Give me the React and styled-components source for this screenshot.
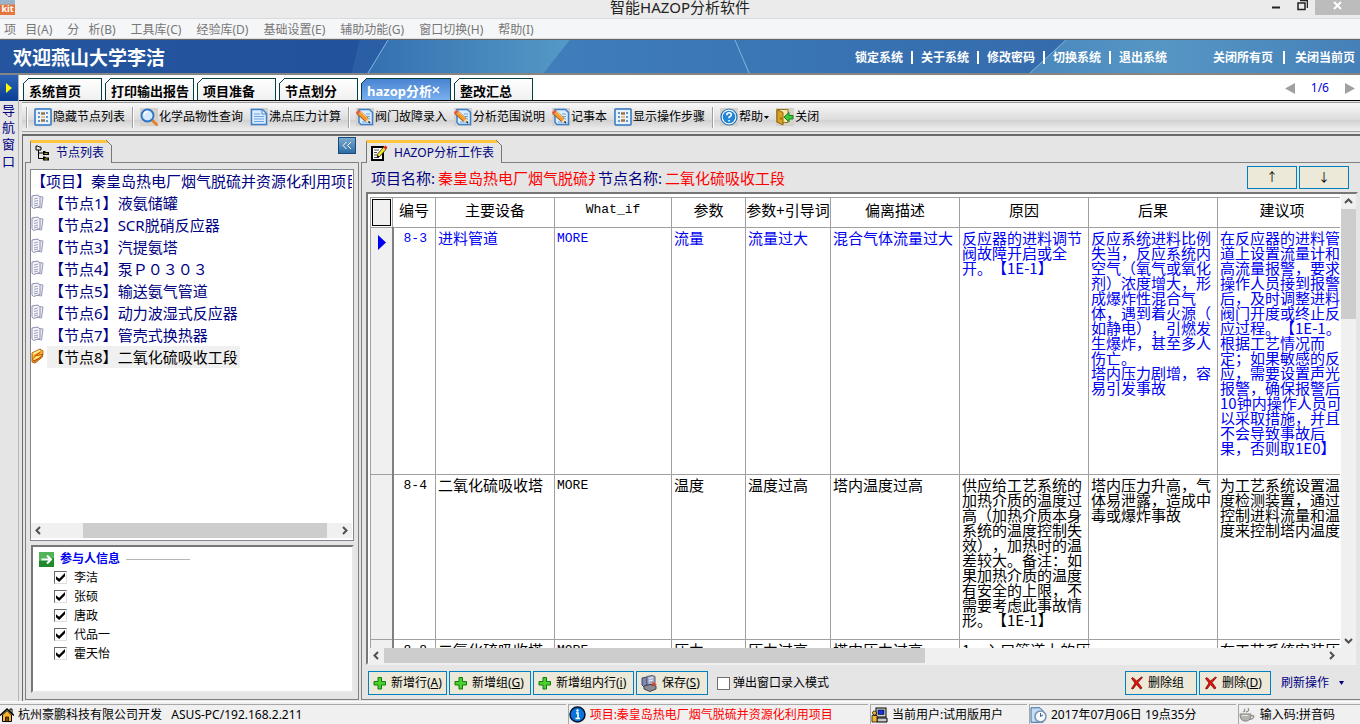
import React, { useState } from 'react'
import styled, { createGlobalStyle } from 'styled-components'

const GlobalStyle = createGlobalStyle`
  * { box-sizing: border-box; }
  body {
    margin: 0;
    overflow: hidden;
    background: #f0f0f0;
    color: #000;
    font: 12px/16px "Noto Sans", "Noto Sans CJK SC", sans-serif;
    text-spacing-trim: space-all;
  }
  button, input { font: inherit; color: inherit; margin: 0; }
  button { padding: 0; border: 0; background: none; white-space: nowrap; }
  a { color: inherit; text-decoration: none; }
  svg { display: block; flex: none; }
`

const MENUS = ['项   目(A)', '分   析(B)', '工具库(C)', '经验库(D)', '基础设置(E)', '辅助功能(G)', '窗口切换(H)', '帮助(I)']

const SYSTEM_LINKS = ['锁定系统', '关于系统', '修改密码', '切换系统', '退出系统']

const TABS = [
  { title: '系统首页', width: 79 },
  { title: '打印输出报告', width: 89 },
  { title: '项目准备', width: 79 },
  { title: '节点划分', width: 79 },
  { title: 'hazop分析', width: 90, closable: true },
  { title: '整改汇总', width: 79 },
]

const NODES = ['液氨储罐', 'SCR脱硝反应器', '汽提氨塔', '泵Ｐ０３０３', '输送氨气管道', '动力波湿式反应器', '管壳式换热器', '二氧化硫吸收工段']

const PEOPLE = ['李洁', '张硕', '唐政', '代品一', '霍天怡']

const COLUMNS = [
  { title: '编号', width: 43 },
  { title: '主要设备', width: 119 },
  { title: 'What_if', width: 117, mono: true },
  { title: '参数', width: 74 },
  { title: '参数+引导词', width: 85 },
  { title: '偏离描述', width: 129 },
  { title: '原因', width: 129 },
  { title: '后果', width: 129 },
  { title: '建议项', width: 129 },
]

const ROWS = [
  {
    height: 247,
    cells: [
      '8-3', '进料管道', 'MORE', '流量', '流量过大', '混合气体流量过大',
      '反应器的进料调节\n阀故障开启或全\n开。【1E-1】',
      '反应系统进料比例\n失当，反应系统内\n空气（氧气或氧化\n剂）浓度增大，形\n成爆炸性混合气\n体，遇到着火源（\n如静电），引燃发\n生爆炸，甚至多人\n伤亡。\n塔内压力剧增，容\n易引发事故',
      '在反应器的进料管\n道上设置流量计和\n高流量报警，要求\n操作人员接到报警\n后，及时调整进料\n阀门开度或终止反\n应过程。【1E-1。\n根据工艺情况而\n定；如果敏感的反\n应，需要设置声光\n报警，确保报警后\n10钟内操作人员可\n以采取措施，并且\n不会导致事故后\n果，否则取1E0】',
    ],
  },
  {
    height: 165,
    cells: [
      '8-4', '二氧化硫吸收塔', 'MORE', '温度', '温度过高', '塔内温度过高',
      '供应给工艺系统的\n加热介质的温度过\n高（加热介质本身\n系统的温度控制失\n效），加热时的温\n差较大。备注：如\n果加热介质的温度\n有安全的上限，不\n需要考虑此事故情\n形。【1E-1】',
      '塔内压力升高，气\n体易泄露，造成中\n毒或爆炸事故',
      '为工艺系统设置温\n度检测装置，通过\n控制进料流量和温\n度来控制塔内温度',
    ],
  },
  {
    height: 165,
    cells: ['8-8', '二氧化硫吸收塔', 'MORE', '压力', '压力过高', '塔内压力过高', '1、入口管道上的压', '', '在工艺系统安装压'],
  },
]

/* ---------- icons ---------- */

const ListIcon = () => (
  <svg width="18" height="18" viewBox="0 0 18 18">
    <rect x="1" y="1" width="16" height="16" rx="1" fill="#e8f3ff" stroke="#2f78c4" strokeWidth="1.5" />
    <path d="M4 5h2M4 9h2M4 13h2M12 5h2M12 9h2M12 13h2" stroke="#2f78c4" strokeWidth="1.5" />
    <path d="M7 5.500h4M7 12.500h4" stroke="#9c7440" strokeWidth="2.500" />
    <path d="M7 9h4" stroke="#e4c184" strokeWidth="2" />
  </svg>
)

const SearchIcon = () => (
  <svg width="18" height="18" viewBox="0 0 18 18">
    <path d="M12 12l4.500 4.500" stroke="#e8822a" strokeWidth="3" strokeLinecap="round" />
    <circle cx="7.500" cy="7.500" r="6" fill="#d5eaff" stroke="#2b74c8" strokeWidth="1.800" />
    <path d="M4 7a3.500 3.500 0 0 1 4-3.500" stroke="#fff" strokeWidth="1.500" fill="none" />
  </svg>
)

const PageIcon = () => (
  <svg width="18" height="18" viewBox="0 0 18 18">
    <path d="M1.500 1.500h11l4 4v11h-15z" fill="#dcecff" stroke="#3a80cc" strokeWidth="1.500" />
    <path d="M12 1.500v4.500h4.500z" fill="#fff" stroke="#3a80cc" />
    <path d="M4 6h6M4 8.500h10M4 11h10M4 13.500h10" stroke="#6aa4dd" />
  </svg>
)

const EditIcon = () => (
  <svg width="18" height="18" viewBox="0 0 18 18">
    <path d="M3 1.500h10.500l3 3v12H5l-2-2z" fill="#dcecff" stroke="#3a80cc" strokeWidth="1.500" />
    <path d="M10 6h4M11 8.500h3M6 14h8M12 11h2" stroke="#6aa4dd" />
    <path d="M2 4l9 8" stroke="#8a4a10" strokeWidth="5" />
    <path d="M2 4l9 8" stroke="#f79a2e" strokeWidth="3.500" />
    <path d="M3.500 3l8 7" stroke="#ffd884" />
    <path d="M.8 5.500L3.500 2.500" stroke="#e0584c" strokeWidth="2.500" />
    <path d="M9.500 13.500l3-3 1.500 4.500z" fill="#f7dcae" />
    <path d="M12.500 13.500l1.500 1.500" stroke="#222" strokeWidth="1.500" />
  </svg>
)

const HelpIcon = () => (
  <svg width="18" height="18" viewBox="0 0 18 18">
    <circle cx="9" cy="9" r="8" fill="#fff" stroke="#2670b8" strokeWidth="1.200" />
    <circle cx="9" cy="9" r="6.300" fill="#2186d8" />
    <path d="M6.800 7.200q0-2.400 2.300-2.400t2.200 1.900q0 1.200-2.200 2.500v1M9.100 12v1.500" fill="none" stroke="#fff" strokeWidth="1.600" />
  </svg>
)

const ExitIcon = () => (
  <svg width="18" height="18" viewBox="0 0 18 18">
    <path d="M1 1.500h11v13H1z" fill="#f5e7b4" stroke="#9a7412" />
    <path d="M1 1.500l6 3V17l-6-3z" fill="#d9a21c" stroke="#8a6410" />
    <path d="M5 9.500v2" stroke="#553b00" />
    <path d="M8 9l5-4.500v3h4v3.500h-4v3z" fill="#3fc83c" stroke="#16801a" />
  </svg>
)

const TreeIcon = () => (
  <svg width="15" height="16" viewBox="0 0 15 16">
    <path d="M1 1h2l1 1h2v3H1zM3.500 5v8.500H8M3.500 8H8" fill="none" stroke="#000" />
    <path d="M8 6h2l1 1h3v3H8zM8 11.500h2l1 1h3v3H8z" fill="#000" />
    <path d="M9.500 8.500h3M9.500 14h3" stroke="#b9b12c" />
  </svg>
)

const NoteIcon = () => (
  <svg width="17" height="17" viewBox="0 0 17 17">
    <path d="M1 2h11v13H1z" fill="#fff" stroke="#000" strokeWidth="2" />
    <path d="M3 5h5M3 7.500h3M3 10h4M3 12.500h5" stroke="#555" />
    <path d="M7 11l7-8" stroke="#444" strokeWidth="4" />
    <path d="M7 11l7-8" stroke="#f6ea1c" strokeWidth="2.500" />
    <path d="M13.500 3.500l2-2" stroke="#e41b1b" strokeWidth="3" />
    <path d="M5.500 13l1-3 2 1.500z" fill="#000" />
  </svg>
)

const DocsIcon = () => (
  <svg width="14" height="16" viewBox="0 0 14 16">
    <path d="M5 2l7 1-1.500 11-5.500-1z" fill="#e9eaf3" stroke="#9699b5" />
    <path d="M1 2L7 1l2 2.500v9L2.500 14.500 1 13z" fill="#f6f6fb" stroke="#8d90ae" />
    <path d="M3 5l4-1M3 7.500l4-1M3 10l4-1M3 12l4-1" stroke="#9da0bc" />
  </svg>
)

const OpenDocIcon = () => (
  <svg width="14" height="16" viewBox="0 0 14 16">
    <path d="M1 5l8-4 3 2-.5 6L4 15l-3-1z" fill="#ffb01e" stroke="#b5650c" />
    <path d="M2 6l7-3.500" stroke="#fff0b0" strokeWidth="1.500" />
    <path d="M1.500 11L5 7.500l7-1L8.500 10l-6 3z" fill="#ffe070" stroke="#a8500a" />
    <path d="M4 8l5.500-4M3 14l7-5" stroke="#c0500a" />
  </svg>
)

const GoIcon = () => (
  <svg width="15" height="15" viewBox="0 0 15 15">
    <rect width="15" height="15" fill="#1e8a2c" />
    <path d="M0 0h15v6L0 9z" fill="#53b359" />
    <path d="M2.500 7.500h9M8 3.500l4 4-4 4" stroke="#fff" strokeWidth="2" fill="none" />
  </svg>
)

const PlusIcon = () => (
  <svg width="14" height="14" viewBox="0 0 14 14">
    <path d="M5 1.500h3.500v4h4V9h-4v4H5V9H1V5.500h4z" fill="#4bd12b" stroke="#137a10" />
  </svg>
)

const CrossIcon = () => (
  <svg width="14" height="14" viewBox="0 0 14 14">
    <path d="M1.500 2.500l1.500-1 3.500 3.500 5-4 1 .5L8 6.500l4 5.500-1.500 1L6.500 8.500 3 13l-1.500-.5 3.500-5.500z" fill="#e3120b" stroke="#7c0a06" strokeWidth=".8" />
  </svg>
)

const SaveIcon = () => (
  <svg width="17" height="17" viewBox="0 0 17 17">
    <path d="M1 3l5-1v9l-3 1-2-2z" fill="#7f87b4" stroke="#454a66" />
    <path d="M6 1.500l5-1 3 1v7l-5 2-3-1z" fill="#a7aec8" stroke="#555b75" />
    <path d="M3 11l6-1.500 6 1.500v3l-6 2.500L3 14z" fill="#8b8b93" stroke="#43434b" />
    <path d="M8 3.500l4-1M8 6l4-1" stroke="#eef0ff" strokeWidth="1.200" />
    <path d="M11 6.500l5 3-4 1.500z" fill="#e8412a" />
  </svg>
)

const HomeIcon = () => (
  <svg width="14" height="16" viewBox="0 0 14 16">
    <path d="M10 5V2h2v5" fill="#fff" stroke="#000" />
    <path d="M2.500 8L7 3.500 11.500 8v6.500h-9z" fill="#f7b42c" stroke="#000" />
    <path d="M0 8.500L7 2l7 6.500" fill="none" stroke="#000" strokeWidth="1.500" />
    <path d="M5.500 14.500V10h3v4.500z" fill="#7a4a10" stroke="#000" strokeWidth=".7" />
  </svg>
)

const InfoIcon = () => (
  <svg width="17" height="17" viewBox="0 0 17 17">
    <circle cx="8.500" cy="8.500" r="7.500" fill="#0a74dc" stroke="#001430" strokeWidth="1.500" />
    <path d="M7 7h2v5.500M6.500 12.500h4.500" stroke="#fff" strokeWidth="1.600" fill="none" />
    <circle cx="8.500" cy="4.500" r="1.200" fill="#fff" />
  </svg>
)

const UserIcon = () => (
  <svg width="17" height="16" viewBox="0 0 17 16">
    <rect x="5" y="1" width="10" height="9" fill="#d5d5d5" stroke="#000" />
    <rect x="7" y="3" width="6" height="4.500" fill="#1034e0" stroke="#000" strokeWidth=".6" />
    <path d="M6 11h10v4H6z" fill="#c9c9c9" stroke="#000" />
    <circle cx="3.500" cy="6" r="2" fill="#f2b632" stroke="#000" strokeWidth=".7" />
    <path d="M1 8.500h5V15H1z" fill="#f2b632" stroke="#000" strokeWidth=".7" />
  </svg>
)

const ClockIcon = () => (
  <svg width="17" height="16" viewBox="0 0 17 16">
    <path d="M1 .8h9l3 3v11.500H1z" fill="#c4dcf4" stroke="#3a6ca4" />
    <circle cx="10.500" cy="9.500" r="5.500" fill="#f5f9fd" stroke="#7a93ae" strokeWidth="1.500" />
    <path d="M10.500 6v3.500l2.500-1.500" stroke="#365e8a" fill="none" />
  </svg>
)

const CupIcon = () => (
  <svg width="17" height="16" viewBox="0 0 17 16">
    <path d="M1 7h11q0 6-4 7H5Q1 13 1 7z" fill="#b5b5b0" stroke="#85857e" />
    <path d="M12 9q4-1 2.500 1.500T10 12M4 5q3-1 1-3M7 5q4-1 2-4" fill="none" stroke="#8f8f88" strokeWidth="1.300" />
    <path d="M3 8.500h6" stroke="#e6e6e2" />
  </svg>
)

const Arrow = ({ dir = 'up' }) => {
  const turn = { up: 0, right: 90, down: 180, left: 270 }[dir]
  return (
    <svg width="15" height="15" viewBox="0 0 15 15">
      <path d="M4 9l3.500-3.500L11 9" transform={`rotate(${turn} 7.500 7.500)`} fill="none" stroke="#505050" strokeWidth="2" />
    </svg>
  )
}

/* ---------- shell ---------- */

const Window = styled.div`
  display: flex;
  flex-direction: column;
  height: 100vh;
`

const TitleBar = styled.header`
  display: flex;
  justify-content: space-between;
  height: 19px;
  background: #ebebeb;
  border-bottom: 1px solid #dadada;
`

const AppBadge = styled.span`
  width: 15px;
  height: 15px;
  background: linear-gradient(#9ab4cc 0 25%, #e5763c 35%);
  color: #fff;
  font: bold 9px/18px "Noto Sans", sans-serif;
  text-align: center;
`

const Side = styled.div`
  display: flex;
  flex: 1;
  justify-content: ${p => (p.$end ? 'flex-end' : 'flex-start')};
`

const AppTitle = styled.h1`
  margin: 0;
  font-size: 15px;
  line-height: 15px;
  font-weight: normal;
  color: #222;
`

const WindowButton = styled.button`
  display: flex;
  justify-content: center;
  width: ${p => (p.$close ? 45 : 26)}px;
  height: 15px;
  background: ${p => (p.$close ? '#bcbcbc' : 'transparent')};
`

const MenuBar = styled.nav`
  display: flex;
  gap: 15px;
  height: 20px;
  padding: 2px 4px 0;
  background: #f5f6f7;
  color: #777;
  border-bottom: 1px solid #ddd;

  button { white-space: pre; }
`

const Banner = styled.div`
  position: relative;
  display: flex;
  align-items: center;
  height: 36px;
  padding: 2px 5px 0 13px;
  background: #3a74b4;
  color: #fff;
  border-top: 1px solid #666;
  border-bottom: 2px solid #858585;
`

const BannerArt = styled.svg`
  position: absolute;
  inset: 0;
  width: 100%;
  height: 100%;
`

const Welcome = styled.h2`
  position: relative;
  margin: 0;
  flex: 1;
  font-size: 19px;
  line-height: 24px;
`

const LinkGroup = styled.nav`
  position: relative;
  display: flex;
  margin-left: 46px;
  font-weight: bold;

  a + a::before {
    content: '';
    display: inline-block;
    width: 2px;
    height: 13px;
    margin: 0 ${p => (p.$loose ? 10 : 8)}px;
    background: #fff;
    vertical-align: -2px;
  }
`

const Main = styled.div`
  display: flex;
  flex: 1;
  min-height: 0;
  background: #e5e5e5;
`

const NavStrip = styled.aside`
  width: 19px;
  background: #e5e5e5;
  border-right: 1px solid #b5b5b5;
  color: #000080;
  font-size: 13px;
  line-height: 17px;
  text-align: center;

  p { margin: 1px 2px 0 0; padding: 0 2px; }
`

const NavToggle = styled.button`
  display: flex;
  align-items: center;
  justify-content: center;
  width: 18px;
  height: 26px;
  background: linear-gradient(#2d62b4, #0a3d94);
`

const Body = styled.div`
  display: flex;
  flex: 1;
  flex-direction: column;
  min-width: 0;
`

const TabBar = styled.div`
  display: flex;
  align-items: flex-end;
  gap: 3px;
  height: 26px;
  padding: 0 5px 0 4px;
  background: #fff;
  border-bottom: 1px solid #000;
`

const PageTab = styled.button`
  position: relative;
  display: flex;
  align-items: center;
  width: ${p => p.$width}px;
  height: 22px;
  padding: 2px 0 0 5px;
  border: 1px solid #024040;
  border-bottom: 0;
  background: ${p => (p.$active ? 'linear-gradient(#4a83d2, #79b0ee)' : 'linear-gradient(#fff, #f0f0f0)')};
  color: ${p => (p.$active ? '#fff' : '#000')};
  font-size: 13px;
  font-weight: bold;

  &::before {
    content: '';
    position: absolute;
    top: -1px;
    left: -1px;
    width: 6px;
    height: 6px;
    background: linear-gradient(135deg, #fff 42%, #024040 42% 58%, transparent 58%);
  }
`

const Pager = styled.div`
  display: flex;
  align-items: center;
  gap: 16px;
  height: 24px;
  margin-left: auto;
  color: #0000e0;
`

const Toolbar = styled.div`
  display: flex;
  align-items: center;
  gap: 7px;
  height: 30px;
  margin: 1px 0 2px 3px;
  padding-left: 4px;
  background: linear-gradient(#f8f8f8, #dcdcdc 60%, #d0d0d0 60%, #f0f0f0);
  border-top: 1px solid #999;
  border-bottom: 1px solid #a0a0a0;
`

const Separator = styled.i`
  width: 1px;
  height: 21px;
  background: #a0a0a0;
  box-shadow: 1px 0 #fff;
`

const ToolButton = styled.button`
  display: flex;
  align-items: center;
  gap: 1px;

  > svg:first-child { background: #d4d1cb; }
`

const Workspace = styled.div`
  display: flex;
  flex: 1;
  gap: 2px;
  min-height: 0;
  margin-left: 3px;
  padding: 0 0 1px 2px;
  border-top: 2px solid #696969;
  border-left: 1px solid #696969;
`

const Pane = styled.section`
  display: flex;
  flex-direction: column;
  flex: ${p => (p.$wide ? '1' : '0 0 334px')};
  min-width: 0;
`

const PaneHead = styled.div`
  display: flex;
  align-items: flex-end;
  justify-content: space-between;
  height: 26px;
  padding: 0 3px 0 5px;
`

const PaneTab = styled.h3`
  position: relative;
  z-index: 1;
  display: flex;
  align-items: center;
  gap: 6px;
  height: 23px;
  margin: 0 0 -1px;
  padding: 0 7px 0 4px;
  background: #e5e5e5;
  border: 1px solid #777;
  border-top: 3px solid #ffc440;
  border-bottom: 0;
  color: #000080;
  font-size: 12px;
  font-weight: normal;

  &::after {
    content: '';
    position: absolute;
    top: -3px;
    right: -1px;
    width: 6px;
    height: 6px;
    background: linear-gradient(225deg, #e5e5e5 42%, #777 42% 58%, transparent 58%);
  }
`

const CollapseButton = styled.button`
  display: flex;
  align-items: center;
  justify-content: center;
  align-self: flex-start;
  width: 18px;
  height: 17px;
  margin-top: 1px;
  border: 1px solid #174b78;
  background: linear-gradient(#79a9cf, #2c6da6);
`

const PaneBody = styled.div`
  display: flex;
  flex: 1;
  flex-direction: column;
  min-height: 0;
  padding: ${p => (p.$wide ? '0 2px 4px 4px' : '6px 4px')};
  border: 1px solid #808080;
  border-right-width: ${p => (p.$wide ? 0 : 1)}px;
`

/* ---------- left pane ---------- */

const TreeBox = styled.div`
  display: flex;
  flex: 1;
  flex-direction: column;
  min-height: 0;
  padding: 0 1px 2px 0;
  overflow: hidden;
  background: #fff;
  border: 1px solid #828790;
`

const NodeTree = styled.ul`
  flex: 1;
  margin: 0;
  padding: 0;
  overflow: hidden;
  list-style: none;
  color: #000080;
  font-size: 15px;
  line-height: 22px;
  white-space: nowrap;
`

const NodeItem = styled.li`
  display: flex;
  gap: 2px;

  svg { margin-top: 2px; }

  span {
    padding: 0 2px;
    background: ${p => (p.$active ? '#f0f0f0' : 'none')};
    color: ${p => (p.$active ? '#000' : 'inherit')};
  }
`

const ScrollTrack = styled.div`
  display: flex;
  flex: none;
  flex-direction: ${p => (p.$vertical ? 'column' : 'row')};
  align-items: stretch;
  padding-right: ${p => (p.$corner ? 17 : 0)}px;
  background: #f0f0f0;
`

const ScrollSpace = styled.i`
  flex: ${p => p.$size};
  background: ${p => (p.$thumb ? '#cdcdcd' : 'none')};
`

const PeopleBox = styled.fieldset`
  height: 148px;
  margin: 4px 0 0 1px;
  padding: 4px 6px;
  background: #fff;
  border: 2px solid;
  border-color: #777 #e8e8e8 #e8e8e8 #777;
`

const PeopleTitle = styled.div`
  display: flex;
  align-items: center;
  gap: 6px;
  margin-bottom: 1px;
  color: #0000f0;
  font-weight: bold;

  &::after {
    content: '';
    width: 64px;
    height: 1px;
    background: #b5b5b5;
  }
`

const CheckLabel = styled.label`
  display: flex;
  align-items: center;
  gap: ${p => (p.$flat ? 3 : 7)}px;
  height: 19px;
  margin-left: ${p => (p.$flat ? 7 : 15)}px;
`

const CheckBox = styled.input`
  appearance: none;
  width: 13px;
  height: 13px;
  background: #fff;
  border: 1px solid #777;
  border-color: ${p => (p.$flat ? '#707070' : '#696969 #dedede #dedede #696969')};

  &:checked::before {
    content: '';
    display: block;
    width: 9px;
    height: 9px;
    margin: 1px;
    background: #000;
    clip-path: polygon(0 35%, 35% 65%, 100% 0, 100% 35%, 35% 100%, 0 70%);
  }
`

/* ---------- worksheet ---------- */

const InfoRow = styled.div`
  display: flex;
  align-items: center;
  height: 29px;
  padding: 0 9px 0 5px;
  color: #000080;
  font-size: 15px;
  line-height: 22px;
  white-space: nowrap;
`

const InfoValue = styled.span`
  width: ${p => p.$width}px;
  margin: 0 3px;
  overflow: hidden;
  color: #f00;
`

const MoveButtons = styled.div`
  display: flex;
  gap: 2px;
  margin-left: auto;
`

const FormButton = styled.button`
  display: flex;
  align-items: center;
  justify-content: ${p => (p.$center ? 'center' : 'flex-start')};
  gap: 4px;
  width: ${p => p.$width}px;
  height: ${p => (p.$center ? 23 : 24)}px;
  padding: 0 4px;
  background: #ece9d8;
  border: 1px solid #0080c0;
  color: #000;
  font-size: 12px;
`

const GridBox = styled.div`
  display: flex;
  flex: 1;
  flex-direction: column;
  min-height: 0;
  padding-left: 1px;
  background: #fff;
  border: 2px solid;
  border-color: #777 #e5e5e5 #f0f0f0 #777;
`

const GridMain = styled.div`
  display: flex;
  flex: 1;
  min-height: 0;
`

const GridView = styled.div`
  flex: 1;
  min-width: 0;
  padding: 3px 0 0 1px;
  margin-right: 1px;
  overflow: hidden;
`

const Sheet = styled.table`
  width: 976px;
  table-layout: fixed;
  border-collapse: collapse;
  font: 15px/15px "Noto Sans CJK SC", sans-serif;
`

const HeadCell = styled.th`
  width: ${p => p.$width}px;
  height: 29px;
  padding: 0 0 6px;
  border: 1px solid #a0a0a0;
  font: ${p => (p.$mono ? '13px/17px "Liberation Mono", monospace' : 'inherit')};
  font-weight: normal;
  white-space: nowrap;
`

const CornerCell = styled.td`
  width: 22px;
  padding: 1px;
  border: 1px solid #a0a0a0;

  &::before {
    content: '';
    display: block;
    height: 25px;
    background: #f0f0f0;
    border: 1px solid #000;
  }
`

const MarkerCell = styled.td`
  padding: 7px 0 0 6px;
  vertical-align: top;
  background: #f0f0f0;
  border: 1px solid #a0a0a0;
  border-right: 2px solid #808080;
`

const SheetRow = styled.tr`
  height: ${p => p.$height}px;
  color: ${p => (p.$active ? '#0000f0' : '#000')};
`

const Cell = styled.td`
  padding: 2px 0 0 2px;
  vertical-align: top;
  border: 1px solid #a0a0a0;
  font: ${p => (p.$mono ? '13px/18px "Liberation Mono", monospace' : 'inherit')};
  text-align: ${p => (p.$center ? 'center' : 'left')};
  white-space: pre;
`

const ActionBar = styled.div`
  display: flex;
  align-items: center;
  gap: 2px;
  padding: 6px 14px 0 2px;
`

const RefreshButton = styled.button`
  display: flex;
  align-items: center;
  gap: 10px;
  margin-left: 8px;
  color: #000080;
`

/* ---------- status bar ---------- */

const StatusBar = styled.footer`
  display: grid;
  grid-template-columns: 569fr 302fr 158fr 208fr 123fr;
  gap: 2px;
  height: 23px;
  padding-top: 2px;
  background: #f0f0f0;
  border-top: 1px solid #fff;
`

const StatusItem = styled.div`
  display: flex;
  align-items: center;
  gap: 4px;
  overflow: hidden;
  border-top: 1px solid #a8a8a8;
  border-left: ${p => (p.$first ? 0 : 1)}px solid #a8a8a8;
  color: ${p => (p.$alert ? '#f00' : '#000')};
  white-space: pre;
`

const Tool = ({ icon, children }) => (
  <ToolButton type="button">
    {icon}
    <span>{children}</span>
  </ToolButton>
)

const HScroll = ({ sizes, corner }) => (
  <ScrollTrack $corner={corner}>
    <Arrow dir="left" />
    <ScrollSpace $size={sizes[0]} />
    <ScrollSpace $size={sizes[1]} $thumb />
    <ScrollSpace $size={sizes[2]} />
    <Arrow dir="right" />
  </ScrollTrack>
)

const NodePane = () => {
  const [active, setActive] = useState(7)

  return (
    <Pane>
      <PaneHead>
        <PaneTab><TreeIcon />节点列表</PaneTab>
        <CollapseButton type="button" aria-label="收起">
          <svg width="10" height="9" viewBox="0 0 10 9">
            <path d="M4.500 1L1 4.500 4.500 8M9 1L5.500 4.500 9 8" fill="none" stroke="#fff" />
          </svg>
        </CollapseButton>
      </PaneHead>
      <PaneBody>
        <TreeBox>
          <NodeTree>
            <li>【项目】秦皇岛热电厂烟气脱硫并资源化利用项目</li>
            {NODES.map((name, i) => (
              <NodeItem key={name} $active={i === active} onClick={() => setActive(i)}>
                {i === active ? <OpenDocIcon /> : <DocsIcon />}
                <span>【节点{i + 1}】{name}</span>
              </NodeItem>
            ))}
          </NodeTree>
          <HScroll sizes={[37, 244, 10]} />
        </TreeBox>
        <PeopleBox>
          <PeopleTitle><GoIcon />参与人信息</PeopleTitle>
          {PEOPLE.map(name => (
            <CheckLabel key={name}>
              <CheckBox type="checkbox" defaultChecked />
              {name}
            </CheckLabel>
          ))}
        </PeopleBox>
      </PaneBody>
    </Pane>
  )
}

const Worksheet = () => (
  <Sheet>
    <thead>
      <tr>
        <CornerCell />
        {COLUMNS.map(col => (
          <HeadCell key={col.title} $width={col.width} $mono={col.mono}>{col.title}</HeadCell>
        ))}
      </tr>
    </thead>
    <tbody>
      {ROWS.map((row, r) => (
        <SheetRow key={row.cells[0]} $height={row.height} $active={r === 0}>
          <MarkerCell>
            {r === 0 && (
              <svg width="9" height="15" viewBox="0 0 9 15"><path d="M1 0l8 7.500L1 15z" fill="#0000f0" /></svg>
            )}
          </MarkerCell>
          {row.cells.map((text, c) => (
            <Cell key={COLUMNS[c].title} $mono={c === 0 || c === 2} $center={c === 0}>{text}</Cell>
          ))}
        </SheetRow>
      ))}
    </tbody>
  </Sheet>
)

const WorkPane = () => (
  <Pane $wide>
    <PaneHead>
      <PaneTab><NoteIcon />HAZOP分析工作表</PaneTab>
    </PaneHead>
    <PaneBody $wide>
      <InfoRow>
        项目名称:
        <InfoValue $width={157}>秦皇岛热电厂烟气脱硫并资源化利用项目</InfoValue>
        节点名称:
        <InfoValue $width={120}>二氧化硫吸收工段</InfoValue>
        <MoveButtons>
          <FormButton type="button" $width={50} $center>↑</FormButton>
          <FormButton type="button" $width={50} $center>↓</FormButton>
        </MoveButtons>
      </InfoRow>
      <GridBox>
        <GridMain>
          <GridView><Worksheet /></GridView>
          <ScrollTrack $vertical>
            <Arrow dir="up" />
            <ScrollSpace $size={110} $thumb />
            <ScrollSpace $size={314} />
            <Arrow dir="down" />
          </ScrollTrack>
        </GridMain>
        <HScroll sizes={[0, 540, 399]} corner />
      </GridBox>
      <ActionBar>
        <FormButton type="button" $width={79}><PlusIcon /><span>新增行(<u>A</u>)</span></FormButton>
        <FormButton type="button" $width={82}><PlusIcon /><span>新增组(<u>G</u>)</span></FormButton>
        <FormButton type="button" $width={101}><PlusIcon /><span>新增组内行(<u>i</u>)</span></FormButton>
        <FormButton type="button" $width={72}><SaveIcon /><span>保存(<u>S</u>)</span></FormButton>
        <CheckLabel $flat>
          <CheckBox type="checkbox" $flat />
          弹出窗口录入模式
        </CheckLabel>
        <MoveButtons>
          <FormButton type="button" $width={72}><CrossIcon />删除组</FormButton>
          <FormButton type="button" $width={72}><CrossIcon /><span>删除(<u>D</u>)</span></FormButton>
        </MoveButtons>
        <RefreshButton type="button">
          刷新操作
          <svg width="5" height="4" viewBox="0 0 5 4"><path d="M0 0h5L2.500 4z" fill="#000080" /></svg>
        </RefreshButton>
      </ActionBar>
    </PaneBody>
  </Pane>
)

const App = () => {
  const [tab, setTab] = useState(4)

  return (
    <Window>
      <GlobalStyle />
      <TitleBar>
        <Side><AppBadge>kit</AppBadge></Side>
        <AppTitle>智能HAZOP分析软件</AppTitle>
        <Side $end>
          <WindowButton type="button" aria-label="最小化">
            <svg width="10" height="15"><path d="M1 7.500h8" stroke="#222" strokeWidth="2" /></svg>
          </WindowButton>
          <WindowButton type="button" aria-label="还原">
            <svg width="11" height="15"><path d="M1 3h7v6.500H1zM3 .5h7.500V8" fill="none" stroke="#222" strokeWidth="1.500" /></svg>
          </WindowButton>
          <WindowButton type="button" aria-label="关闭" $close>
            <svg width="9" height="15"><path d="M1 2l7 7M8 2L1 9" stroke="#fff" strokeWidth="1.800" /></svg>
          </WindowButton>
        </Side>
      </TitleBar>

      <MenuBar>
        {MENUS.map(name => <button type="button" key={name}>{name}</button>)}
      </MenuBar>

      <Banner>
        <BannerArt viewBox="0 0 1360 33" preserveAspectRatio="none" aria-hidden="true">
          <defs>
            <linearGradient id="deep"><stop offset="0" stopColor="#25559f" /><stop offset="1" stopColor="#22529c" /></linearGradient>
            <linearGradient id="glow"><stop offset="0" stopColor="#3470b0" /><stop offset="1" stopColor="#5499c6" /></linearGradient>
            <linearGradient id="mid"><stop offset="0" stopColor="#3f7dbb" /><stop offset="1" stopColor="#346bac" /></linearGradient>
            <linearGradient id="tail"><stop offset="0" stopColor="#4a88bd" /><stop offset=".4" stopColor="#5696c4" /><stop offset="1" stopColor="#4580b8" /></linearGradient>
          </defs>
          <path d="M0 0h360l-8 33H0z" fill="url(#deep)" />
          <path d="M360 0h28l-20 33h-16z" fill="#2a5fa6" />
          <path d="M388 0h182l-26 33H368z" fill="url(#glow)" />
          <path d="M570 0h496l-36 33H544z" fill="url(#mid)" />
          <path d="M1066 0h294v33h-330z" fill="url(#tail)" />
          <path d="M388 0l-20 33M735 0l14 33M1066 0l-36 33" stroke="#86b6dc" fill="none" />
        </BannerArt>
        <Welcome>欢迎燕山大学李洁</Welcome>
        <LinkGroup>
          {SYSTEM_LINKS.map(name => <a href="#" key={name}>{name}</a>)}
        </LinkGroup>
        <LinkGroup $loose>
          <a href="#">关闭所有页</a>
          <a href="#">关闭当前页</a>
        </LinkGroup>
      </Banner>

      <Main>
        <NavStrip>
          <NavToggle type="button" aria-label="展开导航">
            <svg width="6" height="10" viewBox="0 0 6 10"><path d="M0 0l6 5-6 5z" fill="#ff0" /></svg>
          </NavToggle>
          <p>导航窗口</p>
        </NavStrip>
        <Body>
          <TabBar>
            {TABS.map((t, i) => (
              <PageTab type="button" key={t.title} $width={t.width} $active={i === tab} onClick={() => setTab(i)}>
                {t.title}
                {t.closable && (
                  <svg width="8" height="14" viewBox="0 0 8 14"><path d="M1 3l6 6M7 3L1 9" stroke="#fff" strokeWidth="1.500" /></svg>
                )}
              </PageTab>
            ))}
            <Pager>
              <svg width="10" height="11" viewBox="0 0 10 11"><path d="M10 0v11L0 5.500z" fill="#a0a0a0" /></svg>
              1/6
              <svg width="10" height="11" viewBox="0 0 10 11"><path d="M0 0v11l10-5.500z" fill="#a0a0a0" /></svg>
            </Pager>
          </TabBar>
          <Toolbar>
            <Separator />
            <Tool icon={<ListIcon />}>隐藏节点列表</Tool>
            <Separator />
            <Tool icon={<SearchIcon />}>化学品物性查询</Tool>
            <Tool icon={<PageIcon />}>沸点压力计算</Tool>
            <Separator />
            <Tool icon={<EditIcon />}>阀门故障录入</Tool>
            <Tool icon={<EditIcon />}>分析范围说明</Tool>
            <Tool icon={<EditIcon />}>记事本</Tool>
            <Tool icon={<ListIcon />}>显示操作步骤</Tool>
            <Separator />
            <ToolButton type="button">
              <HelpIcon />
              帮助
              <svg width="5" height="3" viewBox="0 0 5 3"><path d="M0 0h5L2.500 3z" /></svg>
            </ToolButton>
            <Tool icon={<ExitIcon />}>关闭</Tool>
          </Toolbar>
          <Workspace>
            <NodePane />
            <WorkPane />
          </Workspace>
        </Body>
      </Main>

      <StatusBar>
        <StatusItem $first><HomeIcon />{'杭州豪鹏科技有限公司开发   ASUS-PC/192.168.2.211'}</StatusItem>
        <StatusItem $alert><InfoIcon />项目:秦皇岛热电厂烟气脱硫并资源化利用项目</StatusItem>
        <StatusItem><UserIcon />当前用户:试用版用户</StatusItem>
        <StatusItem><ClockIcon />2017年07月06日 19点35分</StatusItem>
        <StatusItem><CupIcon />输入码:拼音码</StatusItem>
      </StatusBar>
    </Window>
  )
}

export default App
